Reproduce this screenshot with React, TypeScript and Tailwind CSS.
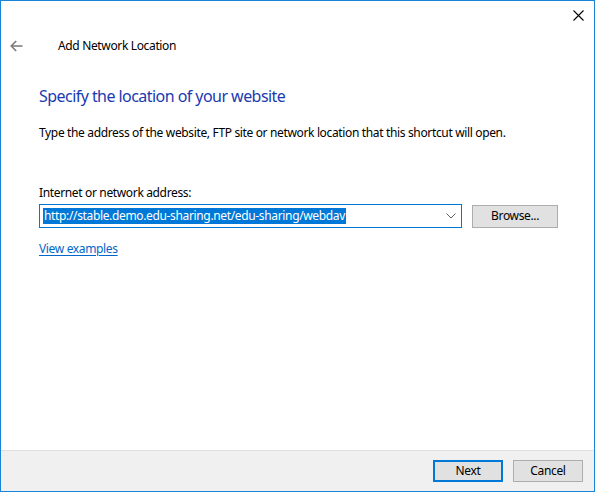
import React from "react";

function BackArrow() {
  return (
    <svg width="13" height="12" viewBox="0 0 13 12" fill="none" stroke="#777" strokeWidth="1.5">
      <path d="M1.2 6H12.5" />
      <path d="M6.2 1L1.2 6L6.2 11" />
    </svg>
  );
}

function CloseGlyph() {
  return (
    <svg width="11" height="11" viewBox="0 0 11 11" stroke="#000" strokeWidth="1.1">
      <path d="M0.5 0.5L10.5 10.5M10.5 0.5L0.5 10.5" />
    </svg>
  );
}

function Chevron() {
  return (
    <svg width="10" height="6" viewBox="0 0 10 6" fill="none" stroke="#606060" strokeWidth="1">
      <path d="M0.5 0.5L5 5L9.5 0.5" />
    </svg>
  );
}

export default function App() {
  return (
    <div className="w-[595px] h-[492px] flex flex-col border border-[#1883d7] bg-white text-[12px] tracking-[-0.35px] text-black font-['Segoe_UI','Noto_Sans',sans-serif]">
      {/* caption bar */}
      <div className="h-[29px] flex justify-end">
        <div className="w-[32px] h-[29px] flex items-center justify-center">
          <CloseGlyph />
        </div>
      </div>

      {/* navigation row */}
      <div className="h-[31px] flex items-center">
        <div className="w-[57px] pl-[9px] flex items-center">
          <BackArrow />
        </div>
        <span className="leading-none">Add Network Location</span>
      </div>

      {/* body */}
      <div className="flex-1 pl-[38px] pr-[36px] flex flex-col">
        <h1 className="mt-[25px] text-[16px] leading-[20px] tracking-[-0.55px] text-[#1a3ab0]">
          Specify the location of your website
        </h1>
        <p className="mt-[19px] leading-[16px]">
          Type the address of the website, FTP site or network location that this shortcut will open.
        </p>

        <label className="mt-[44px] leading-[16px]">Internet or network address:</label>
        <div className="mt-[3px] flex items-center gap-[10px]">
          <div className="w-[424px] h-[24px] border border-[#0078d7] flex items-center pl-[3px] pr-[4px]">
            <span className="bg-[#0078d7] text-white leading-[16px] px-[1px]">
              http://stable.demo.edu-sharing.net/edu-sharing/webdav
            </span>
            <div className="ml-auto flex items-center mr-[1px]">
              <Chevron />
            </div>
          </div>
          <button className="w-[86px] h-[23px] border border-[#adadad] bg-[#e1e1e1] flex items-center justify-center leading-none">
            Browse...
          </button>
        </div>

        <a className="mt-[13px] self-start leading-[16px] text-[#0066cc] underline underline-offset-[2px]">
          View examples
        </a>
      </div>

      {/* command area */}
      <div className="h-[41px] border-t border-[#dfdfdf] bg-[#f0f0f0] flex items-start justify-end gap-[10px] pt-[9px] pr-[11px]">
        <button className="w-[70px] h-[22px] border-2 border-[#0078d7] bg-[#e1e1e1] flex items-center justify-center leading-none">
          Next
        </button>
        <button className="w-[70px] h-[22px] border border-[#adadad] bg-[#e1e1e1] flex items-center justify-center leading-none">
          Cancel
        </button>
      </div>
    </div>
  );
}
